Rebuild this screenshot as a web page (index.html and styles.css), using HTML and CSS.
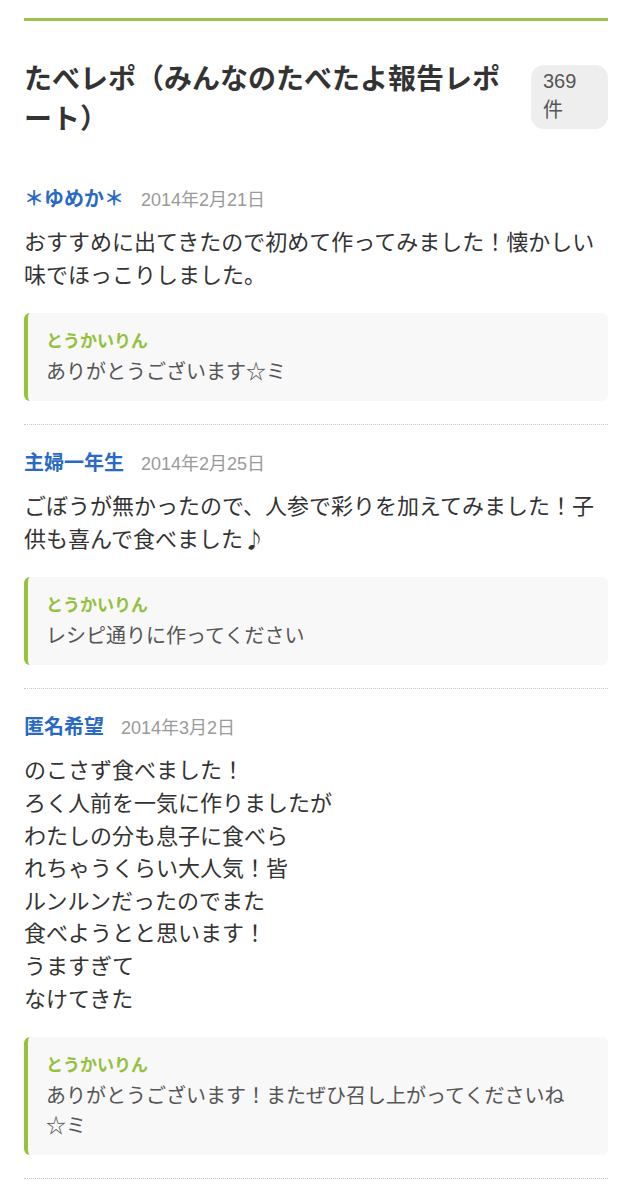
FILE: index.html
```html
<!DOCTYPE html>
<html lang="ja">
<head>
<meta charset="utf-8">
<title>たべレポ</title>
<link rel="stylesheet" href="styles.css">
</head>
<body>
<div class="page">
  <div class="topline"></div>
  <header class="head">
    <h2 class="title">たべレポ（みんなのたべたよ報告レポート）</h2>
    <span class="count">369<br>件</span>
  </header>

  <article class="report">
    <div class="meta"><span class="name">＊ゆめか＊</span><span class="date">2014年2月21日</span></div>
    <p class="body">おすすめに出てきたので初めて作ってみました！懐かしい味でほっこりしました。</p>
    <div class="reply">
      <div class="rname">とうかいりん</div>
      <p class="rtext">ありがとうございます☆ミ</p>
    </div>
  </article>

  <article class="report">
    <div class="meta"><span class="name">主婦一年生</span><span class="date">2014年2月25日</span></div>
    <p class="body">ごぼうが無かったので、人参で彩りを加えてみました！子供も喜んで食べました♪</p>
    <div class="reply">
      <div class="rname">とうかいりん</div>
      <p class="rtext">レシピ通りに作ってください</p>
    </div>
  </article>

  <article class="report">
    <div class="meta"><span class="name">匿名希望</span><span class="date">2014年3月2日</span></div>
    <p class="body">のこさず食べました！<br>ろく人前を一気に作りましたが<br>わたしの分も息子に食べら<br>れちゃうくらい大人気！皆<br>ルンルンだったのでまた<br>食べようとと思います！<br>うますぎて<br>なけてきた</p>
    <div class="reply">
      <div class="rname">とうかいりん</div>
      <p class="rtext">ありがとうございます！またぜひ召し上がってくださいね☆ミ</p>
    </div>
  </article>
</div>
</body>
</html>
```

FILE: styles.css
```css
* { box-sizing: border-box; }
html, body { margin: 0; padding: 0; background: #fff; }
body {
  font-family: "Noto Sans CJK JP", "Noto Sans", "Liberation Sans", sans-serif;
  color: #333;
}
.page { padding: 18px 24px 0; }
.topline { height: 3px; background: #9cc34f; }
.head {
  display: flex;
  align-items: flex-start;
  justify-content: space-between;
  gap: 24px;
  padding-top: 36px;
  height: 163px;
}
.title {
  margin: 0;
  font-size: 28px;
  line-height: 40px;
  font-weight: 700;
  color: #333;
  flex: 1;
}
.count {
  flex: none;
  width: 77px;
  margin-top: 8px;
  padding: 2px 12px 4px;
  background: #eeeeee;
  border-radius: 13px;
  font-family: "Liberation Sans", "Noto Sans CJK JP", sans-serif;
  font-size: 20px;
  line-height: 29px;
  color: #555;
}
.report {
  padding: 23px 0 23px;
  border-bottom: 1px dotted #c8c8c8;
}
.report:first-of-type { padding-top: 0; }
.meta { display: flex; align-items: baseline; gap: 17px; line-height: 28px; }
.name { font-size: 20px; font-weight: 700; color: #2a6ac4; }
.date {
  font-family: "Liberation Sans", "Noto Sans CJK JP", sans-serif;
  font-size: 18px;
  color: #9a9a9a;
}
.body {
  margin: 10px 0 0;
  font-size: 22px;
  line-height: 32.6px;
  color: #333;
}
.reply {
  margin-top: 24px;
  background: #f8f8f8;
  border-left: 4px solid #96c23f;
  border-radius: 6px;
  padding: 14px 26px 15px 18px;
}
.rname { font-size: 17px; font-weight: 700; color: #93c13c; line-height: 26px; }
.rtext {
  margin: 3px 0 0;
  font-size: 20px;
  line-height: 30px;
  color: #555;
}
```
